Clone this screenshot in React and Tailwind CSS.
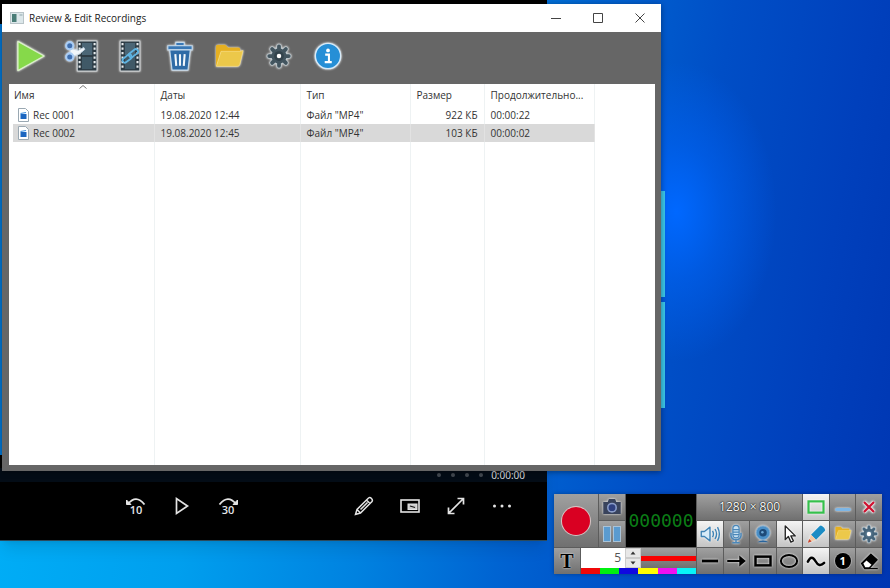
import React from 'react';
import clsx from 'clsx';

const recordings = [
    { name: 'Rec 0001', date: '19.08.2020 12:44', type: 'Файл "MP4"', size: '922 КБ', length: '00:00:22' },
    { name: 'Rec 0002', date: '19.08.2020 12:45', type: 'Файл "MP4"', size: '103 КБ', length: '00:00:02', selected: true }
];

function Icon({ children, className, box = '0 0 32 32' }) {
    return (
        <svg viewBox={box} className={className} fill="none" aria-hidden="true">
            {children}
        </svg>
    );
}

// Eight rounded teeth around a ring
function Gear({ fill, edge, hub, hole }) {
    const teeth = 'M16 3v26M3 16h26M6.8 6.8l18.4 18.4M25.2 6.8 6.8 25.2';
    return (
        <>
            <path d={teeth} stroke={edge} strokeWidth="7" strokeLinecap="round" />
            <circle cx="16" cy="16" r="11" fill={edge} />
            <path d={teeth} stroke={fill} strokeWidth="5" strokeLinecap="round" />
            <circle cx="16" cy="16" r="10" fill={fill} />
            <circle cx="16" cy="16" r="6.5" fill={hub} />
            <circle cx="16" cy="16" r={hole} fill="#fff" />
        </>
    );
}

function Film({ x }) {
    return (
        <g>
            <rect x={x} y="0" width="21" height="32" fill="#2d3b44" stroke="#d5dadd" />
            <rect x={x + 5} y="2" width="11" height="13" fill="#4b6676" />
            <rect x={x + 5} y="17" width="11" height="13" fill="#405967" />
            <path
                d={`M${x + 2.5} 2v29M${x + 18.5} 2v29`}
                stroke="#e8edf0"
                strokeWidth="2.2"
                strokeDasharray="2.4 2.4"
            />
        </g>
    );
}

function PlayIcon() {
    return <path d="M2 .5 30 16 2 31.5z" fill="#86d94a" stroke="#d9efc8" strokeWidth="1.5" strokeLinejoin="round" />;
}

function CutIcon() {
    return (
        <>
            <Film x={12} />
            <path d="m5 8 8 2 6-3 1 2-6 5-6 2-4-1z" fill="#f1f6fa" stroke="#c9d9e6" />
            <circle cx="4" cy="5" r="3.8" fill="#3f6fb0" stroke="#a9cdf5" strokeWidth="2.2" />
            <circle cx="4" cy="17" r="3.8" fill="#3f6fb0" stroke="#a9cdf5" strokeWidth="2.2" />
        </>
    );
}

function JoinIcon() {
    return (
        <>
            <Film x={5.5} />
            <g stroke="#5fb4e2" strokeWidth="2">
                <rect x="7" y="16" width="11" height="5" rx="2.5" transform="rotate(-38 13 18)" />
                <rect x="14" y="11" width="11" height="5" rx="2.5" transform="rotate(-38 19 13)" />
            </g>
        </>
    );
}

function BinIcon() {
    return (
        <>
            <path d="M11.5 4.5V1.5h9v3M3 5h26v4.5H3z" fill="#3a78b5" stroke="#c5d9ea" strokeWidth="1.2" />
            <path d="M5 9.500h22L24.500 31h-17z" fill="#2f6ba6" stroke="#c5d9ea" strokeWidth="1.2" strokeLinejoin="round" />
            <path d="m11 14 1 12.500M16 14v12.500M21 14l-1 12.500" stroke="#f2f7fb" strokeWidth="2.2" />
        </>
    );
}

function FolderIcon() {
    return (
        <>
            <path d="M2 6q0-2 2-2h8l3 3h11q2 0 2 2v4H7L3 27H2z" fill="#e6b021" />
            <path d="M7.500 11H28l3-.8L27.500 25q-.5 2-2.500 2H2.500z" fill="#ecc84a" stroke="#f5dc85" strokeWidth=".8" />
        </>
    );
}

function GearIcon() {
    return <Gear fill="#43555f" edge="#b5c0c6" hub="#33434c" hole="3" />;
}

function InfoIcon() {
    return (
        <>
            <circle cx="16" cy="16" r="13.5" fill="#268fd6" stroke="#d7ebf9" strokeWidth="1.5" />
            <circle cx="16" cy="10" r="2" fill="#fff" />
            <path d="M13 14.500h4v8M12.500 22.500h7.500" stroke="#fff" strokeWidth="2.2" />
        </>
    );
}

const toolbar = [
    { label: 'Play', icon: PlayIcon },
    { label: 'Cut', icon: CutIcon },
    { label: 'Join', icon: JoinIcon },
    { label: 'Delete', icon: BinIcon },
    { label: 'Open folder', icon: FolderIcon },
    { label: 'Settings', icon: GearIcon, small: true },
    { label: 'About', icon: InfoIcon }
];

function SkipArc({ flip, children }) {
    return (
        <span className="flex flex-col items-center">
            <Icon box="0 0 20 8" className={clsx('w-5 h-2', flip && '-scale-x-100')}>
                <path d="M2 7Q10-3 18.500 7.500" stroke="#e4e4e4" strokeWidth="1.8" />
                <path d="M.5 3v4.500H5z" fill="#e4e4e4" stroke="#e4e4e4" />
            </Icon>
            <span className="text-[11px] leading-[10px] font-semibold">{children}</span>
        </span>
    );
}

function PlayerButton({ label, children }) {
    return (
        <button aria-label={label} className="w-[46px] h-12 flex items-center justify-center">
            {children}
        </button>
    );
}

function Player() {
    return (
        <section
            aria-label="Player"
            className="absolute top-0 left-0 right-[343px] bottom-[47px] bg-black text-gray-200 flex flex-col justify-end border-b border-[#2b4a5c] shadow-lg"
        >
            <div className="h-[14px] px-[22px] bg-[#030c16] flex items-center justify-end gap-1 text-[10px] leading-none">
                <span className="flex gap-[10px] mr-1 opacity-25">
                    <i className="size-1 rounded-full bg-white" />
                    <i className="size-1 rounded-full bg-white" />
                    <i className="size-1 rounded-full bg-white" />
                    <i className="size-1 rounded-full bg-white" />
                </span>
                <span>0:00:00</span>
            </div>
            <div className="flex justify-between pl-[113px] pr-[22px] pb-[10px]">
                <div className="flex">
                    <PlayerButton label="Back 10 seconds"><SkipArc>10</SkipArc></PlayerButton>
                    <PlayerButton label="Play video">
                        <Icon className="size-5" box="0 0 20 20">
                            <path d="M4.500 2.500v15L15.500 10z" stroke="#e4e4e4" strokeWidth="1.7" />
                        </Icon>
                    </PlayerButton>
                    <PlayerButton label="Forward 30 seconds"><SkipArc flip>30</SkipArc></PlayerButton>
                </div>
                <div className="flex">
                    <PlayerButton label="Draw">
                        <Icon className="size-5" box="0 0 20 20">
                            <path d="m1.500 18.500 1.500-5L14.500 2q1.500-1 3 .5t.5 3L6.500 17zM3 13.500 6.500 17M12.500 4l3.500 3.500M6.500 13.500l7-7" stroke="#e4e4e4" strokeWidth="1.5" />
                        </Icon>
                    </PlayerButton>
                    <PlayerButton label="Mini view">
                        <Icon className="size-5" box="0 0 20 20">
                            <rect x="1" y="4" width="18" height="12" stroke="#e4e4e4" strokeWidth="1.6" />
                            <rect x="8" y="8" width="9" height="5.500" fill="#ccc" stroke="#e4e4e4" />
                            <path d="m10 10 5 1.500" stroke="#111" strokeWidth="1.2" />
                        </Icon>
                    </PlayerButton>
                    <PlayerButton label="Full screen">
                        <Icon className="size-5" box="0 0 20 20">
                            <path d="M2.500 17.500l15-15M11.500 2.500h6v6M2.500 11.500v6h6" stroke="#e4e4e4" strokeWidth="1.7" />
                        </Icon>
                    </PlayerButton>
                    <PlayerButton label="More">
                        <Icon className="size-5" box="0 0 20 20">
                            <g fill="#e4e4e4">
                                <circle cx="2.500" cy="10" r="1.500" />
                                <circle cx="10" cy="10" r="1.500" />
                                <circle cx="17.500" cy="10" r="1.500" />
                            </g>
                        </Icon>
                    </PlayerButton>
                </div>
            </div>
        </section>
    );
}

function ReviewWindow() {
    const line = 'border-r border-[#eef2f3]';
    const caption = 'w-[42px] h-7 flex items-center justify-center';

    return (
        <main className="absolute top-1 left-[2px] right-[229px] bottom-[117px] bg-[#666] flex flex-col shadow-[0_1px_6px_rgba(0,0,0,0.4)]">
            {/* Title bar */}
            <header className="h-7 bg-white flex items-center justify-between pl-2">
                <div className="flex items-center gap-[5px]">
                    <Icon box="0 0 14 12" className="w-[14px] h-3">
                        <rect x=".5" y=".5" width="13" height="11" fill="#dce7ea" stroke="#b9c4c8" />
                        <rect x="2" y="2" width="4.500" height="8" fill="#4a7d77" />
                        <path d="M9.500 3h3" stroke="#8fa5ac" />
                    </Icon>
                    <h1 className="text-[10px] text-[#222]">Review &amp; Edit Recordings</h1>
                </div>
                <div className="flex text-[#444]">
                    <button aria-label="Minimize" className={caption}>
                        <Icon box="0 0 10 10" className="size-[10px]"><path d="M0 5.500h10" stroke="currentColor" /></Icon>
                    </button>
                    <button aria-label="Maximize" className={caption}>
                        <Icon box="0 0 10 10" className="size-[10px]"><path d="M.5.5h9v9h-9z" stroke="currentColor" /></Icon>
                    </button>
                    <button aria-label="Close" className={caption}>
                        <Icon box="0 0 10 10" className="size-[10px]"><path d="m.5.5 9 9m0-9-9 9" stroke="currentColor" /></Icon>
                    </button>
                </div>
            </header>

            {/* Toolbar */}
            <div className="h-[52px] pl-3 flex items-center">
                <div className="w-[331px] pb-1 flex justify-between">
                    {toolbar.map((item) => (
                        <button key={item.label} aria-label={item.label} className="w-[34px] h-8 flex items-center justify-center">
                            <Icon
                                className={clsx(
                                    'overflow-visible drop-shadow-[0_0_1px_#fff]',
                                    item.small ? 'size-6' : 'size-[30px]'
                                )}
                            >
                                <item.icon />
                            </Icon>
                        </button>
                    ))}
                </div>
            </div>

            {/* File list */}
            <div className="flex-1 min-h-0 ml-[7px] mr-[6px] mb-[6px] pl-1 bg-white relative">
                <Icon box="0 0 8 4" className="absolute left-[70px] top-px w-2 h-1">
                    <path d="M.5 3.500 4 .5l3.500 3" stroke="#777" />
                </Icon>
                <table className="w-full h-full table-fixed border-collapse text-left text-[10px] text-[#333]">
                    <colgroup>
                        <col className="w-[141px]" />
                        <col className="w-[146px]" />
                        <col className="w-[110px]" />
                        <col className="w-[74px]" />
                        <col className="w-[110px]" />
                        <col />
                    </colgroup>
                    <thead>
                        <tr className="h-[22px]">
                            <th className={clsx('font-normal pl-px', line)}>Имя</th>
                            <th className={clsx('font-normal pl-[6px]', line)}>Даты</th>
                            <th className={clsx('font-normal pl-[6px]', line)}>Тип</th>
                            <th className={clsx('font-normal pl-[6px]', line)}>Размер</th>
                            <th className={clsx('font-normal pl-[6px] whitespace-nowrap', line)}>Продолжительно...</th>
                            <td />
                        </tr>
                    </thead>
                    <tbody>
                        {recordings.map((rec) => {
                            const cell = rec.selected ? 'border-r border-[#e2e2e2] bg-[#d9d9d9]' : line;
                            return (
                                <tr key={rec.name} className="h-[18px]">
                                    <td className={clsx('pl-[5px]', cell)}>
                                        <span className="flex items-center gap-1">
                                            <Icon box="0 0 11 14" className="w-[11px] h-[14px]">
                                                <path d="M.5.5h7l3 3v10H.5z" fill="#fff" stroke="#9aa8b2" />
                                                <rect x="2.500" y="6" width="6" height="5" fill="#1c66c0" />
                                                <path d="m2.500 5.500 5.500-1" stroke="#3c8fe0" strokeWidth="1.2" />
                                            </Icon>
                                            {rec.name}
                                        </span>
                                    </td>
                                    <td className={clsx('pl-[6px]', cell)}>{rec.date}</td>
                                    <td className={clsx('pl-[6px]', cell)}>{rec.type}</td>
                                    <td className={clsx('pr-[6px] text-right', cell)}>{rec.size}</td>
                                    <td className={clsx('pl-[6px]', cell)}>{rec.length}</td>
                                    <td />
                                </tr>
                            );
                        })}
                        <tr>
                            <td className={line} />
                            <td className={line} />
                            <td className={line} />
                            <td className={line} />
                            <td className={line} />
                            <td />
                        </tr>
                    </tbody>
                </table>
            </div>
        </main>
    );
}

const tools = [
    {
        label: 'Region',
        on: true,
        draw: <rect x="4" y="7" width="24" height="18" stroke="#35c04b" strokeWidth="3.5" />
    },
    { label: 'Hide', draw: <path d="M6 20h20" stroke="#7db6e6" strokeWidth="5" strokeLinecap="round" /> },
    {
        label: 'Exit',
        draw: (
            <>
                <path d="m8 8 16 16M24 8 8 24" stroke="#ddd" strokeWidth="6" />
                <path d="m8 8 16 16M24 8 8 24" stroke="#d01030" strokeWidth="3.500" />
            </>
        )
    },
    {
        label: 'Speaker',
        on: true,
        draw: (
            <g stroke="#3f83b5" strokeWidth="2.2" strokeLinejoin="round">
                <path d="M2 12h5l9-7v22l-9-7H2z" fill="#d6ebf8" />
                <path d="M20 11q3 5 0 10M24 8q5 8 0 16M28 5q6 11 0 22" />
            </g>
        )
    },
    {
        label: 'Microphone',
        draw: (
            <g stroke="#4b87b8" strokeWidth="2">
                <path d="M8 14v5q1 6 8 6t8-6v-5M16 25v4M10 30h12" strokeWidth="2.500" />
                <rect x="11" y="2" width="10" height="20" rx="5" fill="#c6e0f2" />
                <path d="M11 9h10M11 13h10M11 17h10" />
            </g>
        )
    },
    {
        label: 'Webcam',
        draw: (
            <>
                <path d="M7 29q9-6 18 0z" fill="#28639b" />
                <circle cx="16" cy="14" r="11" fill="#4a8fc7" stroke="#7ba8cc" strokeWidth="1.500" />
                <circle cx="16" cy="14" r="6" fill="#1d4a78" />
                <circle cx="15" cy="13" r="2" fill="#6da9d6" />
            </>
        )
    },
    {
        label: 'Pointer',
        on: true,
        draw: <path d="M10 3v22l5-5 4 9 4-2-4-8h7z" fill="#fff" stroke="#222" strokeWidth="2.2" strokeLinejoin="round" />
    },
    {
        label: 'Pen',
        on: true,
        draw: (
            <>
                <path d="M8 17 22 3q2-2 6 2t2 6L16 25z" fill="#1c8cc4" />
                <path d="m8 17 8 8-12 4z" fill="#f3c9a5" />
                <path d="m5 24 4 4-6 2z" fill="#c8442c" />
            </>
        )
    },
    { label: 'Recordings', draw: <g transform="translate(2 1) scale(.87)"><FolderIcon /></g> },
    {
        label: 'Options',
        draw: <g transform="translate(2 2) scale(.87)"><Gear fill="#46647a" edge="#a9bdca" hub="#54748c" hole="4" /></g>
    },
    { label: 'Line', draw: <path d="M3 16h26" stroke="#000" strokeWidth="4.500" /> },
    { label: 'Arrow', draw: <path d="M2 16h22M23 11v10l6-5z" fill="#000" stroke="#000" strokeWidth="3.500" /> },
    { label: 'Rectangle', draw: <rect x="4" y="9" width="24" height="14" stroke="#000" strokeWidth="4" /> },
    { label: 'Ellipse', draw: <ellipse cx="16" cy="16" rx="13" ry="9.500" stroke="#000" strokeWidth="3.2" /> },
    {
        label: 'Curve',
        on: true,
        draw: <path d="M3 17q6-12 12-1t14 3" stroke="#000" strokeWidth="4" strokeLinecap="round" />
    },
    { label: 'Number', number: 1 },
    {
        label: 'Eraser',
        draw: (
            <>
                <path d="m4 20 15-15 10 9-13 14H9z" fill="#000" stroke="#000" strokeWidth="2" strokeLinejoin="round" />
                <path d="m7 20 5-5 8 7-4 4h-6z" fill="#fff" />
                <path d="M16 28h14" stroke="#000" strokeWidth="2" />
            </>
        )
    }
];

const swatches = [
    { label: 'Red', color: 'bg-[#f00808]' },
    { label: 'Green', color: 'bg-[#00f010]' },
    { label: 'Blue', color: 'bg-[#1008e0]' },
    { label: 'Yellow', color: 'bg-[#ffff00]' },
    { label: 'Magenta', color: 'bg-[#f010f0]' },
    { label: 'Cyan', color: 'bg-[#08f4f8]' }
];

const keyStyle = 'flex items-center justify-center bg-linear-to-b';
const keyOff = 'from-[#a0a0a0] to-[#707070]';
const keyOn = 'from-[#f4f4f4] to-[#c4c4c4]';

function Recorder() {
    return (
        <aside
            aria-label="Recorder"
            className="absolute right-2 bottom-[14px] flex gap-px bg-[#5c5c5c] shadow-[0_0_4px_rgba(0,0,0,0.3)]"
        >
            <div className="w-[142px] flex flex-col gap-px">
                <div className="h-[53px] flex gap-px">
                    <button aria-label="Record" className={clsx('w-11', keyStyle, keyOff)}>
                        <span className="size-7 rounded-full bg-[#d90022] ring-1 ring-[#d8c4c4]" />
                    </button>
                    <div className="w-[26px] flex flex-col gap-px">
                        <button aria-label="Snapshot" className={clsx('h-[26px]', keyStyle, keyOff)}>
                            <Icon className="size-5 drop-shadow-[0_0_1px_#fff]">
                                <path d="M2 8h7l2-5h10l2 5h7v19H2z" fill="#39435c" />
                                <circle cx="16" cy="17" r="8" fill="#8a9cc8" />
                                <circle cx="16" cy="17" r="5.500" fill="#2f4080" />
                            </Icon>
                        </button>
                        <button aria-label="Pause" className={clsx('h-[26px] gap-[4px]', keyStyle, keyOff)}>
                            <span className="w-[6px] h-[14px] bg-[#5a9bd0] ring-1 ring-[#a9c3d8]" />
                            <span className="w-[6px] h-[14px] bg-[#5a9bd0] ring-1 ring-[#a9c3d8]" />
                        </button>
                    </div>
                    <output className="flex-1 bg-black flex items-center justify-center text-[18px] text-[#0b7d16] font-['DejaVu_Sans_Mono',monospace]">
                        000000
                    </output>
                </div>
                <div className="h-[26px] flex gap-px">
                    <button
                        aria-label="Text"
                        className={clsx('w-[26px] text-[20px] leading-none font-bold text-black font-["Liberation_Serif",serif] [text-shadow:0_0_2px_#fff]', keyStyle, keyOff)}
                    >
                        T
                    </button>
                    <div className="flex-1 flex flex-col">
                        <div className="h-5 flex">
                            <input
                                aria-label="Line width"
                                defaultValue="5"
                                className="w-[44px] bg-white pr-1 text-right text-[12px] text-[#555]"
                            />
                            <div className="w-4 flex flex-col bg-[#e8e8e8]">
                                <button aria-label="Thicker" className="flex-1 flex items-center justify-center border border-[#ccc]">
                                    <Icon box="0 0 6 4" className="w-[6px] h-1"><path d="m.5 3.500 2.500-3 2.500 3z" fill="#333" /></Icon>
                                </button>
                                <button aria-label="Thinner" className="flex-1 flex items-center justify-center border border-[#ccc]">
                                    <Icon box="0 0 6 4" className="w-[6px] h-1"><path d="M.5.5h5L3 3.500z" fill="#333" /></Icon>
                                </button>
                            </div>
                            <div className={clsx('flex-1', keyStyle, keyOff)}>
                                <span className="w-full h-[5px] bg-[#f80000]" />
                            </div>
                        </div>
                        <div className="h-[6px] grid grid-cols-6">
                            {swatches.map((swatch) => (
                                <button key={swatch.label} aria-label={swatch.label} className={swatch.color} />
                            ))}
                        </div>
                    </div>
                </div>
            </div>

            <div className="w-[185px] grid grid-cols-7 grid-rows-3 gap-px">
                <div className={clsx('col-span-4 text-[12px] text-white [text-shadow:0_0_2px_#000,0_0_1px_#000]', keyStyle, keyOff)}>
                    1280 × 800
                </div>
                {tools.map((tool) => (
                    <button key={tool.label} aria-label={tool.label} className={clsx(keyStyle, tool.on ? keyOn : keyOff)}>
                        {tool.number ? (
                            <span className="size-4 rounded-full bg-black text-white text-[11px] leading-4 font-bold ring-1 ring-[#aaa]">
                                {tool.number}
                            </span>
                        ) : (
                            <Icon className="size-5 overflow-visible drop-shadow-[0_0_1px_#fff]">{tool.draw}</Icon>
                        )}
                    </button>
                ))}
            </div>
        </aside>
    );
}

export default function App() {
    return (
        <div className="relative h-screen overflow-hidden font-['Open_Sans','Noto_Sans',sans-serif] bg-[radial-gradient(ellipse_100px_150px_at_76%_36%,#0068ff_0%,#0066fc80_45%,#0060f000_100%),linear-gradient(100deg,#00b4fa_0%,#009fee_28%,#0082e0_46%,#0064d2_60%,#004ec6_74%,#0040bc_88%,#0036b2_100%)]">
            {/* Wallpaper panes */}
            <div className="absolute right-[225px] top-[191px] w-5 flex flex-col gap-[5px]">
                <div className="h-[106px] bg-[#3cc8ea]" />
                <div className="h-[106px] bg-[#3cc8ea]" />
            </div>
            <Player />
            <div className="absolute left-0 top-6 bottom-[133px] w-[2px] bg-[#0078d7]" />
            <ReviewWindow />
            <Recorder />
        </div>
    );
}
